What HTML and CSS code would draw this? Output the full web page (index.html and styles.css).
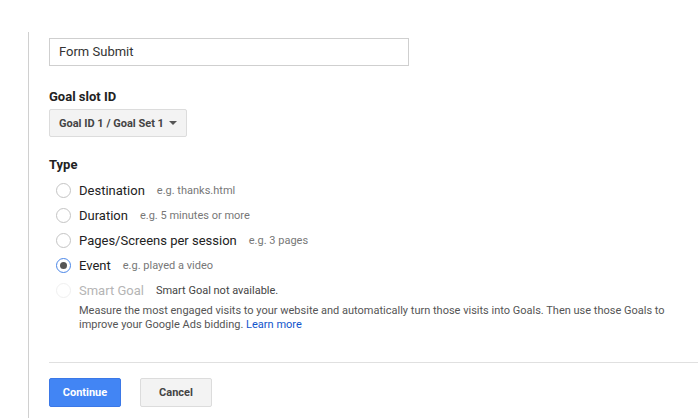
FILE: index.html
```html
<!DOCTYPE html>
<html>
<head>
<meta charset="utf-8">
<link rel="stylesheet" href="styles.css">
</head>
<body>
<div class="panel">
  <div class="name-input">Form Submit</div>

  <div class="field-label slot-label">Goal slot ID</div>
  <div class="dropdown">
    <span>Goal ID 1 / Goal Set 1</span>
    <svg class="caret" width="8" height="4" viewBox="0 0 8 4"><path d="M0 0 L8 0 L4 4 Z" fill="#555"/></svg>
  </div>

  <div class="field-label type-label">Type</div>
  <div class="radios">
    <div class="radio-row">
      <span class="radio"></span>
      <span class="label">Destination</span>
      <span class="hint">e.g. thanks.html</span>
    </div>
    <div class="radio-row">
      <span class="radio"></span>
      <span class="label">Duration</span>
      <span class="hint">e.g. 5 minutes or more</span>
    </div>
    <div class="radio-row">
      <span class="radio"></span>
      <span class="label">Pages/Screens per session</span>
      <span class="hint">e.g. 3 pages</span>
    </div>
    <div class="radio-row">
      <span class="radio checked"></span>
      <span class="label">Event</span>
      <span class="hint">e.g. played a video</span>
    </div>
    <div class="radio-row disabled">
      <span class="radio"></span>
      <span class="label">Smart Goal</span>
      <span class="hint dark">Smart Goal not available.</span>
    </div>
    <p class="desc">Measure the most engaged visits to your website and automatically turn those visits into Goals. Then use those Goals to improve your Google Ads bidding. <a class="link" href="#">Learn more</a></p>
  </div>

  <div class="divider"></div>

  <div class="actions">
    <button class="btn primary">Continue</button>
    <button class="btn secondary">Cancel</button>
  </div>
</div>
</body>
</html>
```

FILE: styles.css
```css
html, body {
  margin: 0;
  padding: 0;
  background: #fff;
  font-family: Roboto, "Liberation Sans", Arial, sans-serif;
  color: #222;
  overflow: hidden;
}

.panel {
  margin: 32px 0 0 28px;
  border-left: 1px solid #d0d0d0;
  padding: 6px 0 20px 20px;
  height: 400px;
  box-sizing: border-box;
}

.name-input {
  width: 360px;
  height: 28px;
  box-sizing: border-box;
  border: 1px solid #cfcfcf;
  padding: 0 9px;
  font-size: 13px;
  line-height: 26px;
  color: #333;
}

.field-label {
  font-size: 13px;
  font-weight: 700;
  color: #222;
  line-height: 16px;
}

.slot-label {
  margin-top: 23px;
}

.dropdown {
  margin-top: 4px;
  width: 138px;
  height: 28px;
  box-sizing: border-box;
  border: 1px solid #dcdcdc;
  background: #f3f3f3;
  border-radius: 2px;
  display: flex;
  align-items: center;
  padding: 0 9px 0 9px;
  font-size: 11px;
  font-weight: 700;
  color: #444;
}

.dropdown span {
  flex: 1;
}

.caret {
  display: block;
}

.type-label {
  margin-top: 20px;
}

.radios {
  margin-top: 5px;
  padding-left: 7px;
}

.radio-row {
  display: flex;
  align-items: center;
  height: 25px;
}

.radio {
  width: 15px;
  height: 15px;
  box-sizing: border-box;
  border: 1px solid #c4c4c4;
  border-radius: 50%;
  margin-right: 8px;
  position: relative;
  flex: none;
}

.radio.checked {
  border-color: #4a86e8;
}

.radio.checked::after {
  content: "";
  position: absolute;
  left: 3px;
  top: 3px;
  width: 7px;
  height: 7px;
  border-radius: 50%;
  background: #555;
}

.label {
  font-size: 13px;
  color: #222;
}

.hint {
  font-size: 11px;
  color: #777;
  margin-left: 12px;
}

.disabled .radio {
  border-color: #f0f0f0;
}

.disabled .label {
  color: #b5b5b5;
}

.hint.dark {
  color: #444;
}

.desc {
  margin: 1px 0 0 23px;
  font-size: 11px;
  line-height: 14px;
  color: #555;
  width: 600px;
}

.link {
  color: #15c;
  text-decoration: none;
}

.divider {
  margin-top: 30px;
  height: 1px;
  background: #e0e0e0;
}

.actions {
  margin-top: 15px;
  display: flex;
  gap: 19px;
}

.btn {
  width: 72px;
  height: 29px;
  box-sizing: border-box;
  border-radius: 2px;
  font-family: Roboto, "Liberation Sans", Arial, sans-serif;
  font-size: 11px;
  font-weight: 700;
  padding: 0;
  cursor: pointer;
}

.primary {
  background: #4285f4;
  border: 1px solid #3b78e7;
  color: #fff;
}

.secondary {
  background: #f3f3f3;
  border: 1px solid #dcdcdc;
  color: #444;
}
```
